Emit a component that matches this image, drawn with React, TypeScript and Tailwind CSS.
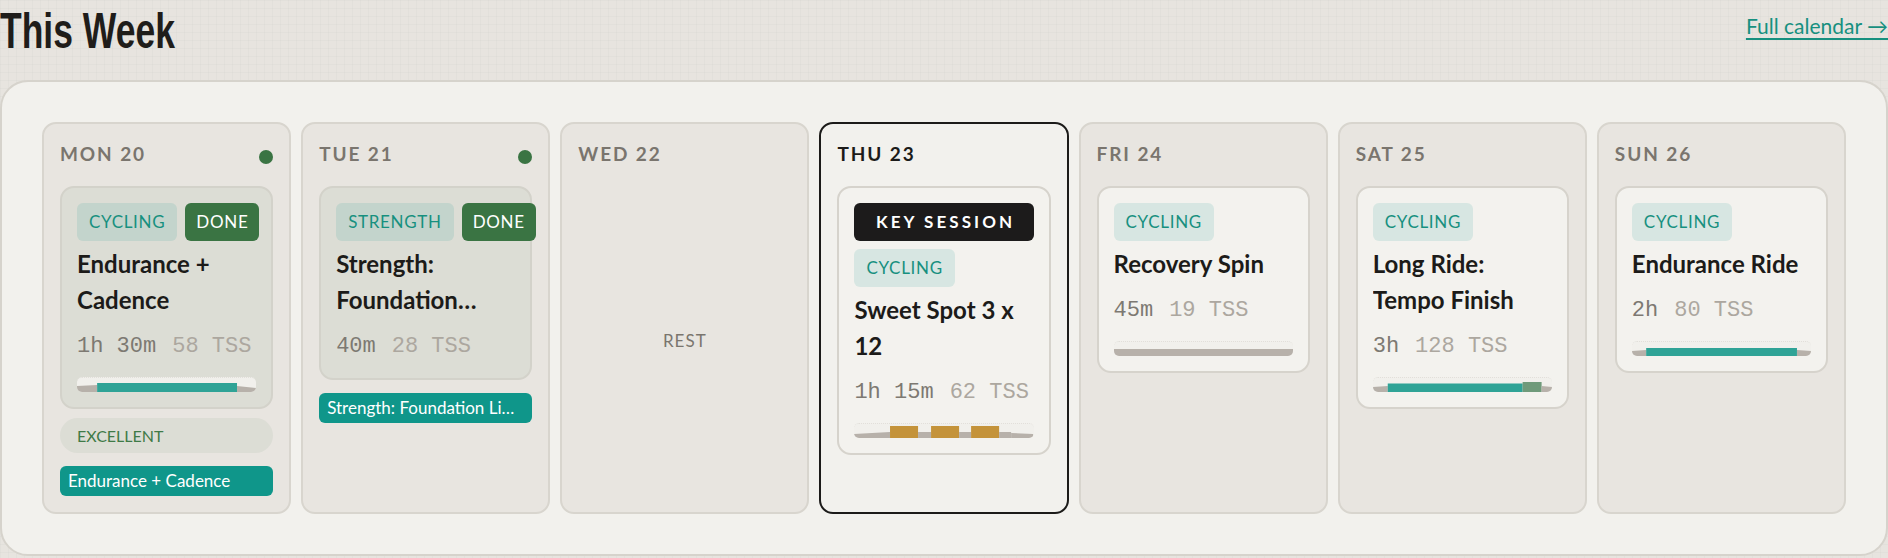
import React from "react";

type Seg = { w: number; h0: number; h1?: number; color: string };

type Session = {
  sport: string;
  title: string;
  duration: string;
  tss: number;
  done?: boolean;
  key?: boolean;
  profile?: Seg[];
};

type Day = {
  label: string;
  today?: boolean;
  completed?: boolean;
  session?: Session;
  rating?: string;
  synced?: string;
};

const GRAY = "#b7b1aa";
const TEAL = "#2fa396";
const TEMPO = "#6f9a7a";
const GOLD = "#c4933a";

const days: Day[] = [
  {
    label: "MON 20",
    completed: true,
    session: {
      sport: "Cycling",
      title: "Endurance + Cadence",
      duration: "1h 30m",
      tss: 58,
      done: true,
      profile: [
        { w: 20, h0: 6, h1: 7, color: GRAY },
        { w: 139, h0: 9, color: TEAL },
        { w: 19, h0: 6, h1: 4, color: GRAY },
      ],
    },
    rating: "Excellent",
    synced: "Endurance + Cadence",
  },
  {
    label: "TUE 21",
    completed: true,
    session: {
      sport: "Strength",
      title: "Strength: Foundation Lifting",
      duration: "40m",
      tss: 28,
      done: true,
    },
    synced: "Strength: Foundation Lifting",
  },
  { label: "WED 22" },
  {
    label: "THU 23",
    today: true,
    session: {
      sport: "Cycling",
      title: "Sweet Spot 3 x 12",
      duration: "1h 15m",
      tss: 62,
      key: true,
      profile: [
        { w: 36, h0: 4, h1: 6, color: GRAY },
        { w: 28, h0: 12, color: GOLD },
        { w: 13, h0: 6, color: GRAY },
        { w: 28, h0: 12, color: GOLD },
        { w: 12, h0: 6, color: GRAY },
        { w: 28, h0: 12, color: GOLD },
        { w: 12, h0: 6, color: GRAY },
        { w: 22, h0: 5, h1: 4, color: GRAY },
      ],
    },
  },
  {
    label: "FRI 24",
    session: {
      sport: "Cycling",
      title: "Recovery Spin",
      duration: "45m",
      tss: 19,
      profile: [{ w: 170, h0: 7, color: GRAY }],
    },
  },
  {
    label: "SAT 25",
    session: {
      sport: "Cycling",
      title: "Long Ride: Tempo Finish",
      duration: "3h",
      tss: 128,
      profile: [
        { w: 14, h0: 5, h1: 6, color: GRAY },
        { w: 128, h0: 8.5, color: TEAL },
        { w: 18, h0: 10, color: TEMPO },
        { w: 10, h0: 6, h1: 5, color: GRAY },
      ],
    },
  },
  {
    label: "SUN 26",
    session: {
      sport: "Cycling",
      title: "Endurance Ride",
      duration: "2h",
      tss: 80,
      profile: [
        { w: 14, h0: 5, h1: 6, color: GRAY },
        { w: 149, h0: 8, color: TEAL },
        { w: 14, h0: 6, h1: 5, color: GRAY },
      ],
    },
  },
];

// workout power profile, drawn bottom-aligned in a 14px strip
function Profile({ segs }: { segs: Seg[] }) {
  const total = segs.reduce((s, x) => s + x.w, 0);
  let x = 0;
  return (
    <div className="mt-[14px] h-[15px] overflow-hidden rounded-[5px] border-t border-dotted border-[#e2dfda] bg-[#f1f0ec]">
      <svg
        viewBox={`0 0 ${total} 14`}
        preserveAspectRatio="none"
        className="block h-[14px] w-full"
      >
        {segs.map((s, i) => {
          const x0 = x;
          x += s.w;
          const h1 = s.h1 ?? s.h0;
          return (
            <polygon
              key={i}
              points={`${x0},14 ${x0},${14 - s.h0} ${x},${14 - h1} ${x},14`}
              fill={s.color}
            />
          );
        })}
      </svg>
    </div>
  );
}

function SessionCard({ s, completed }: { s: Session; completed?: boolean }) {
  return (
    <div
      className={`mt-[19px] flex flex-col rounded-[14px] border-2 p-[15px] ${
        completed
          ? "border-[#d3d2ca] bg-[#dcddd5]"
          : "border-[#d6d3cc] bg-[#f3f2ee]"
      }`}
    >
      {s.key && (
        <div className="mb-2 flex h-[38px] items-center justify-center rounded-[6px] bg-[#1c1b1b] pl-[0.18em] text-[17px] font-bold tracking-[0.18em] text-white">
          KEY SESSION
        </div>
      )}
      <div className="flex gap-2 whitespace-nowrap">
        <span className="flex h-[38px] items-center rounded-[6px] bg-[rgba(15,150,138,0.12)] px-3 text-[17px] uppercase tracking-[0.04em] text-[#17907f]">
          {s.sport}
        </span>
        {s.done && (
          <span className="flex h-[38px] items-center rounded-[6px] bg-[#3a7443] px-[11px] text-[17px] tracking-[0.04em] text-white">
            DONE
          </span>
        )}
      </div>
      <h3 className="mt-[5px] line-clamp-2 text-[24px] font-bold leading-[36px] text-[#1c1b19]">
        {s.title}
      </h3>
      <div className="mt-[12px] flex gap-4 font-['Liberation_Mono',monospace] text-[22px] leading-[33px]">
        <span className="text-[#7d7972]">{s.duration}</span>
        <span className="text-[#aca79f]">{s.tss} TSS</span>
      </div>
      {s.profile && <Profile segs={s.profile} />}
    </div>
  );
}

function DayColumn({ d }: { d: Day }) {
  return (
    <div
      className={`flex min-w-0 flex-col rounded-[14px] border-2 p-4 ${
        d.today
          ? "border-[#1c1b19] bg-[#f2f1ed]"
          : "border-[#d8d5ce] bg-[#e8e5e0]"
      }`}
    >
      <div className="flex h-[27px] items-center justify-between">
        <span
          className={`text-[19px] font-bold leading-[27px] tracking-[0.1em] ${
            d.today ? "text-[#1c1b19]" : "text-[#7a756e]"
          }`}
        >
          {d.label}
        </span>
        {d.completed && (
          <span className="mt-[7px] h-[14px] w-[14px] rounded-full bg-[#3a7443]" />
        )}
      </div>

      {d.session ? (
        <SessionCard s={d.session} completed={d.completed} />
      ) : (
        <div className="mt-[19px] flex flex-1 items-center justify-center text-[17px] tracking-[0.06em] text-[#7a756e]">
          REST
        </div>
      )}

      {d.rating && (
        <div className="mt-[9px] flex h-[35px] items-center rounded-full bg-[#dcddd5] px-[17px] text-[16px] uppercase text-[#3f7a47]">
          {d.rating}
        </div>
      )}
      {d.synced && (
        <div className="mt-[13px] h-[30px] truncate rounded-[6px] bg-[#0f968a] px-2 text-[17px] leading-[30px] text-white">
          {d.synced}
        </div>
      )}
    </div>
  );
}

export default function App() {
  return (
    <div className="min-h-screen w-[1888px] bg-[#e7e4df] font-['Lato',sans-serif] [background-image:linear-gradient(rgba(0,0,0,0.02)_1px,transparent_1px),linear-gradient(90deg,rgba(0,0,0,0.02)_1px,transparent_1px)] [background-size:8px_8px]">
      <div className="flex h-[80px] items-start justify-between">
        {/* condensed display face: Liberation Sans squeezed horizontally */}
        <h2 className="mt-[6px] origin-left scale-x-[0.71] font-['Liberation_Sans',sans-serif] text-[50px] font-bold leading-[50px] text-[#1f1d1a]">
          This Week
        </h2>
        <a
          href="#"
          className="mt-[15px] text-[21px] leading-[21px] text-[#17907f] underline decoration-[1.5px] underline-offset-[4px]"
        >
          Full calendar →
        </a>
      </div>

      <section className="grid grid-cols-7 gap-[10px] rounded-[28px] border-2 border-[#d6d3cc] bg-[#f2f1ed] p-[40px]">
        {days.map((d) => (
          <DayColumn key={d.label} d={d} />
        ))}
      </section>
    </div>
  );
}
